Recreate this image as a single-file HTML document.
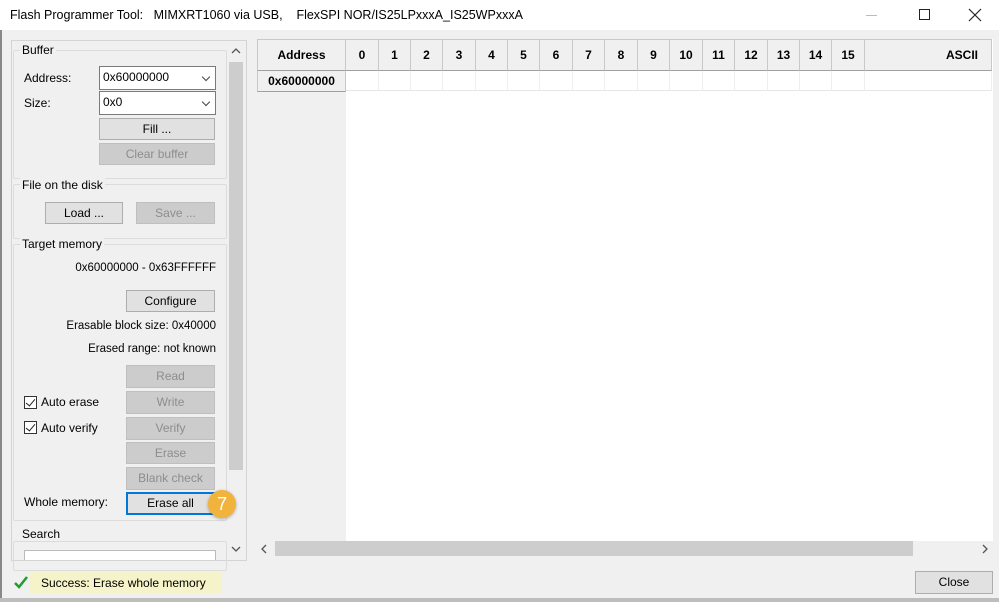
<!DOCTYPE html>
<html><head><meta charset="utf-8"><style>
*{box-sizing:border-box;margin:0;padding:0}
body{width:999px;height:602px;background:#f0f0f0;font-family:"Liberation Sans",sans-serif;font-size:12px;color:#000;position:relative;overflow:hidden}
.a{position:absolute}
.title{left:0;top:0;width:999px;height:30px;background:#fff}
.btn{position:absolute;background:#e1e1e1;border:1px solid #adadad;text-align:center;line-height:20px;font-size:12px}
.dis{background:#cccccc;border-color:#bfbfbf;color:#8d8d8d}
.grp{position:absolute;border:1px solid #dcdcdc;border-radius:2px}
.lbl{position:absolute;font-size:12px;white-space:nowrap}
.rl{position:absolute;font-size:11.5px;white-space:nowrap;right:783px;text-align:right}
.combo{position:absolute;background:#fff;border:1px solid #7a7a7a;padding-left:3px;line-height:21px}
.combo:after{content:"";position:absolute;right:6px;top:7px;width:5px;height:5px;border-right:1px solid #444;border-bottom:1px solid #444;transform:rotate(45deg)}
.chk{position:absolute;width:13px;height:13px;border:1px solid #333;background:#fff}
.chk:after{content:"";position:absolute;left:3px;top:0px;width:4px;height:8px;border-right:1.5px solid #222;border-bottom:1.5px solid #222;transform:rotate(40deg)}
.hc{position:absolute;top:39px;height:32px;background:#f0f0f0;border-right:1px solid #c8c8c8;border-bottom:1px solid #a0a0a0;font-weight:bold;text-align:center;line-height:31px;font-size:12px}
.rc{position:absolute;top:71px;height:20px;background:#fff;border-right:1px solid #eee;border-bottom:1px solid #e6e6e6}
</style></head><body>
<div class="a title"></div>
<div class="lbl" style="left:10px;top:8px;font-size:12.5px">Flash Programmer Tool:&nbsp;&nbsp; MIMXRT1060 via USB,&nbsp;&nbsp;&nbsp; FlexSPI NOR/IS25LPxxxA_IS25WPxxxA</div>
<div class="a" style="left:866px;top:15px;width:11px;height:1px;background:#bbb"></div>
<div class="a" style="left:919px;top:9px;width:11px;height:11px;border:1px solid #222"></div>
<svg class="a" style="left:968px;top:8px" width="14" height="14"><path d="M1 1L13 13M13 1L1 13" stroke="#222" stroke-width="1.2"/></svg>
<div class="a" style="left:0;top:30px;width:2px;height:572px;background:#888"></div>
<div class="a" style="left:0;top:598px;width:999px;height:4px;background:#bdbdbd"></div>

<div class="a" style="left:11px;top:40px;width:236px;height:521px;border:1px solid #d4d4d4"></div>
<div class="a" style="left:229px;top:62px;width:14px;height:408px;background:#cdcdcd"></div>
<svg class="a" style="left:231px;top:47px" width="10" height="8"><path d="M1 6L5 2L9 6" stroke="#555" fill="none" stroke-width="1.3"/></svg>
<svg class="a" style="left:231px;top:545px" width="10" height="8"><path d="M1 2L5 6L9 2" stroke="#555" fill="none" stroke-width="1.3"/></svg>

<div class="grp" style="left:13px;top:50px;width:214px;height:129px"></div>
<div class="lbl" style="left:20px;top:43px;background:#f0f0f0;padding:0 2px">Buffer</div>
<div class="lbl" style="left:24px;top:71px">Address:</div>
<div class="combo" style="left:99px;top:66px;width:117px;height:24px">0x60000000</div>
<div class="lbl" style="left:24px;top:96px">Size:</div>
<div class="combo" style="left:99px;top:91px;width:117px;height:24px">0x0</div>
<div class="btn" style="left:99px;top:118px;width:116px;height:22px">Fill ...</div>
<div class="btn dis" style="left:99px;top:143px;width:116px;height:22px">Clear buffer</div>

<div class="grp" style="left:13px;top:184px;width:214px;height:55px"></div>
<div class="lbl" style="left:20px;top:178px;background:#f0f0f0;padding:0 2px">File on the disk</div>
<div class="btn" style="left:45px;top:202px;width:78px;height:22px">Load ...</div>
<div class="btn dis" style="left:136px;top:202px;width:79px;height:22px">Save ...</div>

<div class="grp" style="left:13px;top:244px;width:214px;height:277px"></div>
<div class="lbl" style="left:20px;top:237px;background:#f0f0f0;padding:0 2px">Target memory</div>
<div class="rl" style="top:262px">0x60000000 - 0x63FFFFFF</div>
<div class="btn" style="left:126px;top:290px;width:89px;height:22px">Configure</div>
<div class="rl" style="top:320px">Erasable block size: 0x40000</div>
<div class="rl" style="top:343px">Erased range: not known</div>
<div class="btn dis" style="left:126px;top:365px;width:89px;height:23px">Read</div>
<div class="btn dis" style="left:126px;top:391px;width:89px;height:23px">Write</div>
<div class="btn dis" style="left:126px;top:417px;width:89px;height:23px">Verify</div>
<div class="btn dis" style="left:126px;top:442px;width:89px;height:22px">Erase</div>
<div class="btn dis" style="left:126px;top:467px;width:89px;height:23px">Blank check</div>
<div class="chk" style="left:24px;top:396px"></div><div class="lbl" style="left:41px;top:395px">Auto erase</div>
<div class="chk" style="left:24px;top:421px"></div><div class="lbl" style="left:41px;top:421px">Auto verify</div>
<div class="lbl" style="left:24px;top:495px">Whole memory:</div>
<div class="btn" style="left:126px;top:492px;width:89px;height:23px;border:2px solid #0078d7;line-height:19px">Erase all</div>
<div class="a" style="left:208px;top:490px;width:28px;height:28px;border-radius:50%;background:#f2b33d;box-shadow:0 1px 3px rgba(0,0,0,.3);color:#fff;font-size:18px;text-align:center;line-height:28px">7</div>

<div class="grp" style="left:13px;top:541px;width:214px;height:30px"></div>
<div class="lbl" style="left:20px;top:527px;background:#f0f0f0;padding:0 2px">Search</div>
<div class="a" style="left:24px;top:550px;width:192px;height:10px;background:#fff;border:1px solid #bbb;border-bottom:none"></div>

<svg class="a" style="left:13px;top:575px" width="16" height="14"><path d="M2 8L6 12L14 2" stroke="#1e9e2a" stroke-width="2.5" fill="none"/></svg>
<div class="a" style="left:30px;top:572px;width:192px;height:21px;background:#f4f3c9"></div>
<div class="lbl" style="left:41px;top:576px">Success: Erase whole memory</div>

<div class="a" style="left:257px;top:39px;width:736px;height:502px;background:#fff"></div>
<div class="a" style="left:257px;top:91px;width:89px;height:450px;background:#f0f0f0"></div>
<div class="hc" style="left:257px;width:89px;border-left:1px solid #c8c8c8;border-top:1px solid #c8c8c8">Address</div>
<div class="hc" style="left:346px;width:33px;border-top:1px solid #c8c8c8">0</div>
<div class="hc" style="left:379px;width:32px;border-top:1px solid #c8c8c8">1</div>
<div class="hc" style="left:411px;width:32px;border-top:1px solid #c8c8c8">2</div>
<div class="hc" style="left:443px;width:33px;border-top:1px solid #c8c8c8">3</div>
<div class="hc" style="left:476px;width:32px;border-top:1px solid #c8c8c8">4</div>
<div class="hc" style="left:508px;width:32px;border-top:1px solid #c8c8c8">5</div>
<div class="hc" style="left:540px;width:33px;border-top:1px solid #c8c8c8">6</div>
<div class="hc" style="left:573px;width:32px;border-top:1px solid #c8c8c8">7</div>
<div class="hc" style="left:605px;width:33px;border-top:1px solid #c8c8c8">8</div>
<div class="hc" style="left:638px;width:32px;border-top:1px solid #c8c8c8">9</div>
<div class="hc" style="left:670px;width:33px;border-top:1px solid #c8c8c8">10</div>
<div class="hc" style="left:703px;width:32px;border-top:1px solid #c8c8c8">11</div>
<div class="hc" style="left:735px;width:33px;border-top:1px solid #c8c8c8">12</div>
<div class="hc" style="left:768px;width:32px;border-top:1px solid #c8c8c8">13</div>
<div class="hc" style="left:800px;width:32px;border-top:1px solid #c8c8c8">14</div>
<div class="hc" style="left:832px;width:33px;border-top:1px solid #c8c8c8">15</div>
<div class="hc" style="left:865px;width:127px;text-align:right;padding-right:13px;border-top:1px solid #c8c8c8">ASCII</div>
<div class="hc" style="left:257px;top:71px;height:21px;width:89px;line-height:20px;border-left:1px solid #c8c8c8">0x60000000</div>
<div class="rc" style="left:346px;width:33px"></div><div class="rc" style="left:379px;width:32px"></div><div class="rc" style="left:411px;width:32px"></div><div class="rc" style="left:443px;width:33px"></div><div class="rc" style="left:476px;width:32px"></div><div class="rc" style="left:508px;width:32px"></div><div class="rc" style="left:540px;width:33px"></div><div class="rc" style="left:573px;width:32px"></div><div class="rc" style="left:605px;width:33px"></div><div class="rc" style="left:638px;width:32px"></div><div class="rc" style="left:670px;width:33px"></div><div class="rc" style="left:703px;width:32px"></div><div class="rc" style="left:735px;width:33px"></div><div class="rc" style="left:768px;width:32px"></div><div class="rc" style="left:800px;width:32px"></div><div class="rc" style="left:832px;width:33px"></div><div class="rc" style="left:865px;width:127px"></div>

<div class="a" style="left:257px;top:541px;width:736px;height:17px;background:#f0f0f0"></div>
<div class="a" style="left:275px;top:541px;width:638px;height:15px;background:#cdcdcd"></div>
<svg class="a" style="left:260px;top:544px" width="8" height="10"><path d="M6 1L2 5L6 9" stroke="#555" fill="none" stroke-width="1.3"/></svg>
<svg class="a" style="left:981px;top:544px" width="8" height="10"><path d="M2 1L6 5L2 9" stroke="#555" fill="none" stroke-width="1.3"/></svg>

<div class="btn" style="left:915px;top:571px;width:78px;height:23px;line-height:21px">Close</div>
</body></html>
